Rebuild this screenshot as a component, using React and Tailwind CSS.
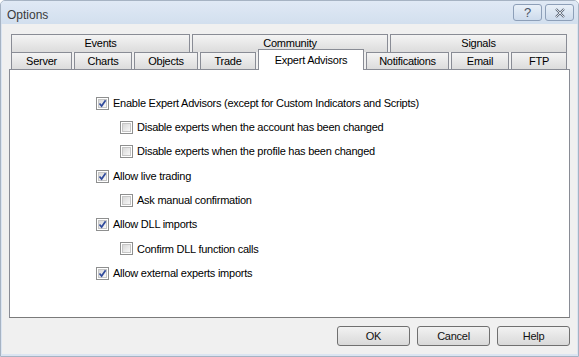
import React from "react";

const font = { fontFamily: '"Liberation Sans", Arial, sans-serif' };

const row1 = [
  { label: "Events", w: "w-[179px]" },
  { label: "Community", w: "w-[196px]" },
  { label: "Signals", w: "w-[177px]" },
];

const row2 = [
  { label: "Server", w: "w-[61px]" },
  { label: "Charts", w: "w-[58px]" },
  { label: "Objects", w: "w-[64px]" },
  { label: "Trade", w: "w-[56px]" },
  { label: "Expert Advisors", w: "w-[106px]", active: true },
  { label: "Notifications", w: "w-[83px]" },
  { label: "Email", w: "w-[58px]" },
  { label: "FTP", w: "w-[56px]" },
];

const options = [
  { label: "Enable Expert Advisors (except for Custom Indicators and Scripts)", checked: true },
  { label: "Disable experts when the account has been changed", sub: true },
  { label: "Disable experts when the profile has been changed", sub: true },
  { label: "Allow live trading", checked: true },
  { label: "Ask manual confirmation", sub: true },
  { label: "Allow DLL imports", checked: true },
  { label: "Confirm DLL function calls", sub: true },
  { label: "Allow external experts imports", checked: true },
];

const Checkbox = ({ checked }) => (
  <div className="w-[13px] h-[13px] border border-[#8e8f8f] bg-white p-[1px] shrink-0">
    <div className="w-full h-full border border-[#c6c6c6] bg-gradient-to-br from-[#d8d8d8] to-[#f8f8f8] relative">
      {checked ? (
        <svg viewBox="0 0 9 9" className="absolute -left-[1px] -top-[1px] w-[9px] h-[9px]">
          <path d="M1.5 4.5 L3.6 7 L7.6 1.2" fill="none" stroke="#2f4a9c" strokeWidth="1.7" />
        </svg>
      ) : null}
    </div>
  </div>
);

const Tab = ({ label, w, active }) =>
  active ? (
    <div
      className={`${w} h-[21px] mb-[-1px] relative z-10 bg-white border border-b-0 border-[#898c95] flex justify-center pt-[2px]`}
    >
      {label}
    </div>
  ) : (
    <div
      className={`${w} h-[17px] bg-gradient-to-b from-[#f4f4f4] to-[#dcdcdc] border border-b-0 border-[#898c95] flex items-center justify-center`}
    >
      {label}
    </div>
  );

const Button = ({ label }) => (
  <div className="w-[73px] h-[20px] rounded-[3px] border border-[#707070] bg-gradient-to-b from-[#f2f2f2] to-[#d9d9d9] flex items-center justify-center text-[#111]">
    {label}
  </div>
);

export default function App() {
  return (
    <div
      className="w-[579px] h-[357px] bg-[#dbe5f2] border border-[#a6b3c3] rounded-t-[5px] flex flex-col text-[11px] tracking-[-0.25px] text-black overflow-hidden"
      style={font}
    >
      {/* title bar */}
      <div className="h-[23px] flex items-start justify-between pl-[6px] pr-[4px] pt-[3px] bg-gradient-to-b from-[#e0e9f5] to-[#d2dfee]">
        <span className="text-[12px] tracking-normal text-[#3a3a3a] mt-[2px]">Options</span>
        <div className="flex gap-[3px]">
          <div className="w-[29px] h-[17px] rounded-[3px] border border-[#8d9fb8] bg-gradient-to-b from-[#e9f0f8] to-[#cddbec] flex items-center justify-center text-[13px] text-[#4a5566]">
            ?
          </div>
          <div className="w-[29px] h-[17px] rounded-[3px] border border-[#8d9fb8] bg-gradient-to-b from-[#e9f0f8] to-[#cddbec] flex items-center justify-center">
            <svg viewBox="0 0 12 10" className="w-[12px] h-[10px]">
              <path d="M2 1 L10 9 M10 1 L2 9" stroke="#5a6678" strokeWidth="2.2" fill="none" />
              <path d="M2 1 L10 9 M10 1 L2 9" stroke="#ffffff" strokeWidth="0.8" fill="none" />
            </svg>
          </div>
        </div>
      </div>

      {/* body */}
      <div className="flex-1 bg-[#f0f0f0] mx-[1px] mb-[2px] flex flex-col pt-[10px] pl-[7px] pr-[7px]">
        <div className="pl-[2px] flex flex-col">
          <div className="flex gap-[2px] h-[18px]">
            {row1.map((t) => (
              <div
                key={t.label}
                className={`${t.w} h-[18px] bg-gradient-to-b from-[#f4f4f4] to-[#dcdcdc] border border-b-0 border-[#898c95] flex items-center justify-center`}
              >
                {t.label}
              </div>
            ))}
          </div>
          <div className="flex items-end gap-[2px] h-[17px]">
            {row2.map((t) => (
              <Tab key={t.label} {...t} />
            ))}
          </div>
        </div>

        <div className="h-[249px] bg-white border border-[#898c95] border-b-[#7a7a7a] pl-[86px] pt-[21px] flex flex-col">
          {options.map((o) => (
            <div
              key={o.label}
              className={`h-[24.3px] flex items-center gap-[4px] ${o.sub ? "pl-[24px]" : ""}`}
            >
              <Checkbox checked={o.checked} />
              <span>{o.label}</span>
            </div>
          ))}
        </div>

        <div className="flex justify-end gap-[7px] mt-[8px]">
          <Button label="OK" />
          <Button label="Cancel" />
          <Button label="Help" />
        </div>
      </div>
    </div>
  );
}
